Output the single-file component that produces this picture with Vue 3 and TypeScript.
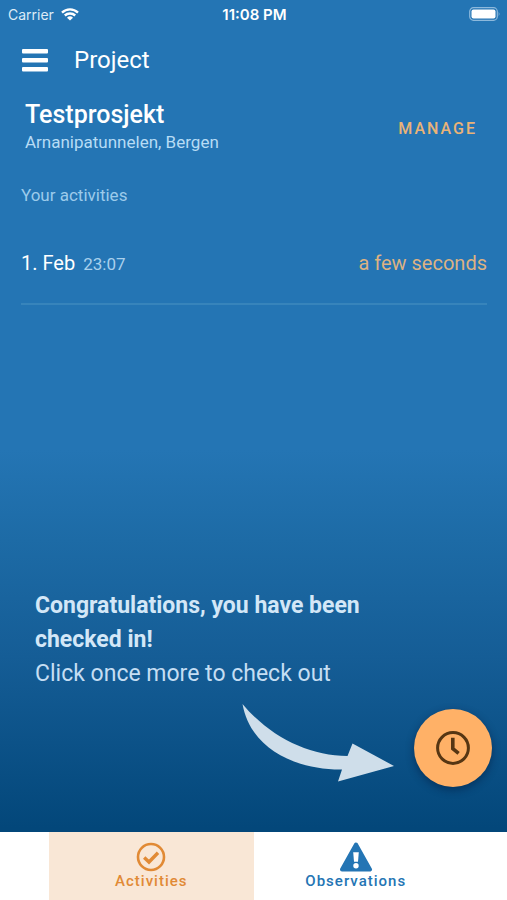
<script setup lang="ts">
import { ref } from 'vue'

type Tab = 'activities' | 'observations'

interface Activity {
  date: string
  time: string
  duration: string
}

const activeTab = ref<Tab>('activities')
const activities: Activity[] = [{ date: '1. Feb', time: '23:07', duration: 'a few seconds' }]
</script>

<template>
  <div class="screen">
    <div class="status">
      <div class="carrier">
        <span>Carrier</span>
        <svg class="wifi" viewBox="0 0 18 13" aria-hidden="true">
          <path d="M1 4.6 A11.6 11.6 0 0 1 17 4.6" />
          <path d="M3.8 7.5 A7.6 7.6 0 0 1 14.2 7.5" />
          <path class="dot" d="M9 12.6 L6 9.7 A4.3 4.3 0 0 1 12 9.7 Z" />
        </svg>
      </div>
      <span class="clock">11:08 PM</span>
      <svg class="battery" viewBox="0 0 32 14" aria-hidden="true">
        <rect class="shell" x="0.7" y="0.7" width="27.6" height="12.6" rx="3.8" />
        <rect class="charge" x="2.5" y="2.5" width="24" height="9" rx="2" />
        <path class="cap" d="M29.7 4.8 Q31.4 7 29.7 9.2 Z" />
      </svg>
    </div>

    <header class="bar">
      <button class="menu" type="button" aria-label="Menu">
        <svg viewBox="0 0 26 23" aria-hidden="true">
          <rect y="0" width="26" height="4.6" rx="1" />
          <rect y="9" width="26" height="4.6" rx="1" />
          <rect y="18" width="26" height="4.6" rx="1" />
        </svg>
      </button>
      <h1>Project</h1>
    </header>

    <main class="content">
      <section class="project">
        <div>
          <h2>Testprosjekt</h2>
          <p class="place">Arnanipatunnelen, Bergen</p>
        </div>
        <button class="manage" type="button">MANAGE</button>
      </section>

      <h3>Your activities</h3>
      <ul class="list">
        <li v-for="a in activities" :key="a.date + a.time">
          <span class="date">{{ a.date }}</span>
          <span class="time">{{ a.time }}</span>
          <span class="duration">{{ a.duration }}</span>
        </li>
      </ul>

      <section class="hint">
        <p class="strong">Congratulations, you have been checked in!</p>
        <p>Click once more to check out</p>
      </section>

      <div class="action">
        <svg class="arrow" viewBox="0 0 152 78" aria-hidden="true">
          <path d="M0.5 0 C28 33 67 52 105.5 52 L110.5 39.5 L152 62 L96 77.5 L100 65.5 C51 66 8 43 0.5 0 Z" />
        </svg>
        <button class="fab" type="button" aria-label="Check out">
          <svg viewBox="0 0 34 34" aria-hidden="true">
            <circle cx="17" cy="17" r="15.4" />
            <path d="M16.8 6.8 V17.6 L22.6 22.4" />
          </svg>
        </button>
      </div>
    </main>

    <nav class="tabs">
      <button
        type="button"
        :class="{ active: activeTab === 'activities' }"
        @click="activeTab = 'activities'"
      >
        <svg class="check" viewBox="0 0 30 30" aria-hidden="true">
          <circle cx="15" cy="15" r="13" />
          <path d="M8.2 15.4 L13 20 L22 10.8" />
        </svg>
        <span>Activities</span>
      </button>
      <button
        type="button"
        :class="{ active: activeTab === 'observations' }"
        @click="activeTab = 'observations'"
      >
        <svg class="warning" viewBox="0 0 34 30" aria-hidden="true">
          <path class="sign" d="M17 2.5 L31 27.5 H3 Z" />
          <path class="mark" d="M14.2 10.3 H19.8 L19 19.8 H15 Z" />
          <circle class="mark" cx="17" cy="23.8" r="2.7" />
        </svg>
        <span>Observations</span>
      </button>
    </nav>
  </div>
</template>

<style>
body {
  margin: 0;
}
</style>

<style scoped>
.screen {
  display: flex;
  flex-direction: column;
  min-height: 100vh;
  font-family: Roboto, 'Liberation Sans', sans-serif;
  color: #fff;
  background: linear-gradient(#2475b4 0%, #2475b4 50%, #1d6ba6 60%, #155d96 73%, #03477a 92%);
}
h1,
h2,
h3,
p,
ul {
  margin: 0;
  padding: 0;
}
button {
  border: 0;
  padding: 0;
  background: none;
  font: inherit;
  color: inherit;
  cursor: pointer;
}
svg {
  display: block;
}
.status {
  display: grid;
  grid-template-columns: 1fr auto 1fr;
  align-items: center;
  height: 28px;
  padding: 0 6px 0 8px;
  font-family: Inter, sans-serif;
  font-size: 14px;
}
.carrier {
  display: flex;
  align-items: center;
  gap: 7px;
  color: #dcebf7;
}
.clock {
  font-size: 15px;
  font-weight: 600;
}
.wifi {
  width: 18px;
  height: 13px;
  fill: none;
  stroke: #fff;
  stroke-width: 2.4;
}
.wifi .dot {
  fill: #fff;
  stroke: none;
}
.battery {
  width: 32px;
  height: 14px;
  justify-self: end;
}
.shell {
  fill: none;
  stroke: #8db9dc;
  stroke-width: 1.2;
}
.charge {
  fill: #fff;
}
.cap {
  fill: #8db9dc;
}
.bar {
  display: flex;
  align-items: center;
  gap: 26px;
  height: 64px;
  padding: 0 22px;
}
.menu svg {
  width: 26px;
  height: 23px;
  fill: #fff;
}
h1 {
  font-size: 24px;
  font-weight: 400;
}
.content {
  flex: 1;
  display: flex;
  flex-direction: column;
  padding: 8px 20px 0 21px;
}
.project {
  display: flex;
  align-items: flex-end;
  justify-content: space-between;
  padding: 0 10px 0 4px;
}
h2 {
  font-size: 25px;
  line-height: 30px;
  font-weight: 500;
}
.place {
  font-size: 17px;
  line-height: 24px;
  color: #b7dcf5;
}
.manage {
  padding: 15px 0;
  font-size: 16px;
  line-height: 20px;
  font-weight: 500;
  letter-spacing: 2px;
  color: #eab377;
}
h3 {
  margin-top: 29px;
  font-size: 17px;
  line-height: 24px;
  font-weight: 400;
  color: #9ccbeb;
}
.list {
  margin-top: 16px;
  list-style: none;
}
.list li {
  display: flex;
  align-items: baseline;
  padding: 26px 0 25px;
  border-bottom: 2px solid #3784bb;
  font-size: 20px;
  line-height: 28px;
}
.time {
  margin-left: 8px;
  font-size: 17px;
  color: #a9d0ec;
}
.duration {
  margin-left: auto;
  color: #dcb283;
}
.hint {
  margin-top: auto;
  padding: 0 80px 0 14px;
  font-size: 23px;
  line-height: 34px;
  color: #c5def3;
}
.hint .strong {
  font-weight: 700;
  color: #d3e7f7;
}
.action {
  display: flex;
  align-items: flex-start;
  justify-content: flex-end;
  gap: 20px;
  padding: 13px 0 45px;
  margin-right: -5px;
}
.arrow {
  width: 152px;
  height: 78px;
  fill: #cfdeea;
}
.fab {
  display: grid;
  place-items: center;
  width: 78px;
  height: 78px;
  margin-top: 5px;
  border-radius: 50%;
  background: #ffb167;
  box-shadow: 0 3px 8px rgba(0, 20, 50, 0.45);
}
.fab svg {
  width: 34px;
  height: 34px;
  fill: none;
  stroke: #563613;
  stroke-width: 3;
}
.fab path {
  stroke-width: 3.6;
}
.tabs {
  display: flex;
  height: 68px;
  padding: 0 49px;
  background: #fff;
}
.tabs button {
  flex: 1;
  display: flex;
  flex-direction: column;
  align-items: center;
  padding-top: 10px;
  font-size: 15px;
  line-height: 18px;
  font-weight: 500;
  letter-spacing: 1px;
  color: #2475b4;
}
.tabs button:first-child {
  color: #e18a35;
}
.tabs .active {
  background: #f9e7d6;
}
.check {
  width: 30px;
  height: 30px;
  fill: none;
  stroke: #e18a35;
  stroke-width: 2.6;
}
.check path {
  stroke-width: 3.4;
}
.warning {
  width: 34px;
  height: 30px;
}
.sign {
  fill: #2475b4;
  stroke: #2475b4;
  stroke-width: 4;
  stroke-linejoin: round;
}
.mark {
  fill: #fff;
}
</style>
